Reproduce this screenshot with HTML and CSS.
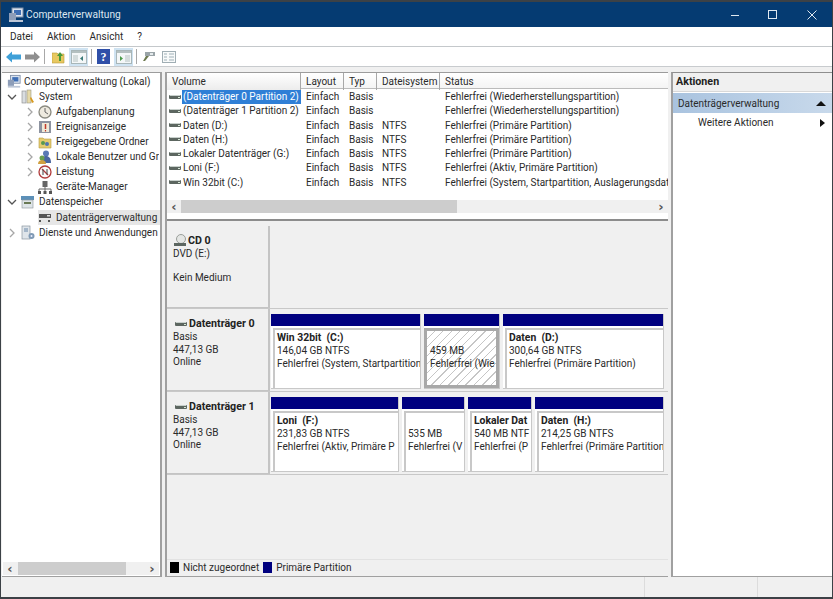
FILE: index.html
```html
<!DOCTYPE html>
<html lang="de">
<head>
<meta charset="utf-8">
<title>Computerverwaltung</title>
<link rel="stylesheet" href="styles.css">
</head>
<body>
<svg class="defs" width="0" height="0">
  <symbol id="disk" viewBox="0 0 12 6"><rect x="0" y="1" width="12" height="4" rx="1" fill="#5c6660"/><rect x="1" y="1" width="10" height="1" fill="#c8d0cc"/><rect x="9" y="3" width="2" height="1" fill="#d8e8d8"/></symbol>
  <symbol id="chev" viewBox="0 0 8 10"><path d="M2 1l4 4-4 4" fill="none" stroke="#a6a6a6" stroke-width="1.3"/></symbol>
  <symbol id="chevd" viewBox="0 0 10 8"><path d="M1 2l4 4 4-4" fill="none" stroke="#555" stroke-width="1.3"/></symbol>
  <symbol id="panel-l" viewBox="0 0 16 14"><rect x=".5" y=".5" width="15" height="13" fill="#f4f7f8" stroke="#a8b6b8"/><rect x="1" y="1" width="14" height="2" fill="#b4c0c0"/><rect x="2" y="5" width="5" height="7" fill="#d4dcdc"/><path d="M12 6v5L9 8.500z" fill="#3a7a78"/></symbol>
  <symbol id="panel-r" viewBox="0 0 16 14"><rect x=".5" y=".5" width="15" height="13" fill="#f4f7f8" stroke="#a8b6b8"/><rect x="1" y="1" width="14" height="2" fill="#b4c0c0"/><rect x="9" y="5" width="5" height="7" fill="#d4dcdc"/><path d="M4 6v5l3-2.500z" fill="#4a9a4a"/></symbol>
</svg>
<div class="window">
  <header class="titlebar">
    <svg class="app-icon" width="16" height="16" viewBox="0 0 16 16"><rect x="4" y="1" width="11" height="9" fill="#d9e2ee" stroke="#7f8fa8"/><rect x="6" y="3" width="7" height="5" fill="#3f6fb5"/><rect x="1" y="6" width="7" height="7" fill="#8d9db8"/><rect x="1" y="13" width="14" height="2" fill="#bcc6d6"/></svg>
    <span class="title">Computerverwaltung</span>
    <div class="controls">
      <svg width="10" height="10" viewBox="0 0 10 10"><path d="M2 5.5h8" stroke="#dfe8f0"/></svg>
      <svg width="10" height="10" viewBox="0 0 10 10"><rect x=".5" y=".5" width="8" height="8" fill="none" stroke="#dfe8f0"/></svg>
      <svg width="10" height="10" viewBox="0 0 10 10"><path d="M.5.5l9 9M9.5.5l-9 9" stroke="#dfe8f0"/></svg>
    </div>
  </header>
  <nav class="menubar"><span>Datei</span><span>Aktion</span><span>Ansicht</span><span>?</span></nav>
  <div class="toolbar">
    <svg class="tb" width="15" height="12" viewBox="0 0 15 12"><path d="M0 6l6-5.500v3h9v5H6v3z" fill="#3fa0d8"/></svg>
    <svg class="tb tb-fwd" width="15" height="12" viewBox="0 0 15 12"><path d="M15 6L9 .5v3H0v5h9v3z" fill="#8f8f8f"/></svg>
    <i class="sep"></i>
    <svg class="tb" width="13" height="14" viewBox="0 0 13 14"><path d="M0 3h5l1 1h6v9H0z" fill="#e8c860" stroke="#b99a3a" stroke-width=".6"/><path d="M7 11V6H5l3-4 3 4H9v5z" fill="#4a9a3a"/></svg>
    <span class="toggled"><svg width="16" height="14"><use href="#panel-l"/></svg></span>
    <i class="sep"></i>
    <svg class="tb" width="13" height="15" viewBox="0 0 13 15"><rect width="13" height="15" fill="#2f4fa8"/><text x="6.500" y="12" class="help">?</text></svg>
    <span class="toggled"><svg width="16" height="14"><use href="#panel-r"/></svg></span>
    <i class="sep"></i>
    <svg class="tb" width="13" height="11" viewBox="0 0 13 11"><rect x="3" y="1" width="10" height="4" fill="#9aa4a8"/><rect x="8" y="2" width="3" height="2" fill="#e4eaec"/><path d="M4 5L1 10h2l4-5z" fill="#6d7a50"/></svg>
    <svg class="tb tb-last" width="14" height="12" viewBox="0 0 14 12"><rect x=".5" y=".5" width="13" height="11" fill="#f8fafa" stroke="#a0aeb4"/><path d="M2 3h3M2 6h3M2 9h3M7 3h5M7 6h5M7 9h5" stroke="#9fb0b8"/></svg>
  </div>
  <main class="content">
    <aside class="tree">
      <ul class="tree-list">
        <li class="lvl0"><i class="tw"></i><svg class="ti" width="15" height="15" viewBox="0 0 16 16"><rect x="4" y="1" width="11" height="9" fill="#d9e2ee" stroke="#7f8fa8"/><rect x="6" y="3" width="7" height="5" fill="#3f6fb5"/><rect x="1" y="6" width="7" height="7" fill="#8d9db8"/><rect x="1" y="13" width="14" height="2" fill="#bcc6d6"/></svg><span>Computerverwaltung (Lokal)</span></li>
        <li class="lvl1"><svg class="tw" width="10" height="8"><use href="#chevd"/></svg><svg class="ti" width="14" height="15" viewBox="0 0 14 15"><rect x="1" y="2" width="4" height="12" fill="#d9dde0" stroke="#888" stroke-width=".6"/><rect x="6" y="1" width="4" height="13" fill="#e6d9a8" stroke="#998" stroke-width=".6"/><path d="M10 8l3 5-2 1-2-5z" fill="#d89a20"/></svg><span>System</span></li>
        <li class="lvl2"><svg class="tw" width="8" height="10"><use href="#chev"/></svg><svg class="ti" width="14" height="14" viewBox="0 0 14 14"><circle cx="7" cy="7" r="6" fill="#eeeadf" stroke="#8a8a80" stroke-width="1.300"/><path d="M7 3v4l3 2" fill="none" stroke="#666"/></svg><span>Aufgabenplanung</span></li>
        <li class="lvl2"><svg class="tw" width="8" height="10"><use href="#chev"/></svg><svg class="ti" width="14" height="14" viewBox="0 0 14 14"><rect x="1" y="1" width="12" height="12" fill="#8d93a0"/><rect x="4" y="3" width="7" height="9" fill="#f0ead8"/><path d="M7.500 4v5" stroke="#c0392b" stroke-width="1.500"/><path d="M7.500 10v1.500" stroke="#c0392b" stroke-width="1.200"/></svg><span>Ereignisanzeige</span></li>
        <li class="lvl2"><svg class="tw" width="8" height="10"><use href="#chev"/></svg><svg class="ti" width="14" height="14" viewBox="0 0 14 14"><path d="M1 3h4l1 1h7v9H1z" fill="#e6cc70" stroke="#b59a40" stroke-width=".6"/><circle cx="5" cy="8" r="2" fill="#5a9a50"/><circle cx="9" cy="9" r="2" fill="#5078b0"/></svg><span>Freigegebene Ordner</span></li>
        <li class="lvl2"><svg class="tw" width="8" height="10"><use href="#chev"/></svg><svg class="ti" width="14" height="14" viewBox="0 0 14 14"><circle cx="8" cy="3.500" r="3" fill="#5a7ab5"/><path d="M3 13c0-5 2-7 5-7s5 2 5 7z" fill="#4a67a0"/><circle cx="4" cy="8" r="2.500" fill="#6aa050"/><path d="M0 14c0-3 2-4 4-4s4 1 4 4z" fill="#d0a040"/></svg><span class="clip">Lokale Benutzer und Gr</span></li>
        <li class="lvl2"><svg class="tw" width="8" height="10"><use href="#chev"/></svg><svg class="ti" width="14" height="14" viewBox="0 0 14 14"><circle cx="7" cy="7" r="6" fill="#fafafa" stroke="#b03a3a" stroke-width="1.300"/><path d="M4 4l6 6" stroke="#b03a3a" stroke-width="1.300"/><path d="M5 10V4.500M9 9.500V4" stroke="#444"/></svg><span>Leistung</span></li>
        <li class="lvl2"><i class="tw"></i><svg class="ti" width="14" height="14" viewBox="0 0 14 14"><rect x="4.500" y="1" width="5" height="6" fill="#666"/><path d="M1 11V9h12v2M7 7v4" fill="none" stroke="#666"/><rect x="0" y="11" width="3" height="3" fill="#555"/><rect x="5.500" y="11" width="3" height="3" fill="#555"/><rect x="11" y="11" width="3" height="3" fill="#555"/></svg><span>Geräte-Manager</span></li>
        <li class="lvl1"><svg class="tw" width="10" height="8"><use href="#chevd"/></svg><svg class="ti" width="14" height="14" viewBox="0 0 14 14"><rect x="0" y="1" width="13" height="4" fill="#5c90b8"/><rect x="1" y="5" width="11" height="8" fill="#dfe5e8" stroke="#8a9298" stroke-width=".6"/><rect x="3" y="7" width="7" height="2" fill="#6a7a55"/></svg><span>Datenspeicher</span></li>
        <li class="lvl2 selected"><i class="tw"></i><svg class="ti" width="14" height="10" viewBox="0 0 14 10"><rect x="1" y="1" width="12" height="4" fill="#555"/><rect x="9" y="2" width="3" height="1.500" fill="#ddd"/><rect x="1" y="7" width="2" height="2" fill="#555"/><rect x="10" y="7" width="2" height="2" fill="#555"/></svg><span>Datenträgerverwaltung</span></li>
        <li class="lvl1"><svg class="tw" width="8" height="10"><use href="#chev"/></svg><svg class="ti" width="14" height="15" viewBox="0 0 14 15"><rect x="1" y="1" width="8" height="13" fill="#dfe5ea" stroke="#8a96a0" stroke-width=".7"/><path d="M3 4h4M3 6h4" stroke="#6a88a8"/><circle cx="10.500" cy="11" r="3" fill="#7f9ab5"/><circle cx="10.500" cy="11" r="1" fill="#eef"/></svg><span class="clip">Dienste und Anwendungen</span></li>
      </ul>
      <div class="hscroll tree-scroll"><b class="arrow">‹</b><i class="thumb"></i><b class="arrow">›</b></div>
    </aside>
    <section class="center">
      <div class="listview">
        <div class="row head"><span>Volume</span><span>Layout</span><span>Typ</span><span>Dateisystem</span><span>Status</span></div>
        <div class="row"><span class="vol"><svg class="di" width="12" height="6"><use href="#disk"/></svg><em class="sel">(Datenträger 0 Partition 2)</em></span><span>Einfach</span><span>Basis</span><span></span><span>Fehlerfrei (Wiederherstellungspartition)</span></div>
        <div class="row"><span class="vol"><svg class="di" width="12" height="6"><use href="#disk"/></svg><em>(Datenträger 1 Partition 2)</em></span><span>Einfach</span><span>Basis</span><span></span><span>Fehlerfrei (Wiederherstellungspartition)</span></div>
        <div class="row"><span class="vol"><svg class="di" width="12" height="6"><use href="#disk"/></svg><em>Daten (D:)</em></span><span>Einfach</span><span>Basis</span><span>NTFS</span><span>Fehlerfrei (Primäre Partition)</span></div>
        <div class="row"><span class="vol"><svg class="di" width="12" height="6"><use href="#disk"/></svg><em>Daten (H:)</em></span><span>Einfach</span><span>Basis</span><span>NTFS</span><span>Fehlerfrei (Primäre Partition)</span></div>
        <div class="row"><span class="vol"><svg class="di" width="12" height="6"><use href="#disk"/></svg><em>Lokaler Datenträger (G:)</em></span><span>Einfach</span><span>Basis</span><span>NTFS</span><span>Fehlerfrei (Primäre Partition)</span></div>
        <div class="row"><span class="vol"><svg class="di" width="12" height="6"><use href="#disk"/></svg><em>Loni (F:)</em></span><span>Einfach</span><span>Basis</span><span>NTFS</span><span>Fehlerfrei (Aktiv, Primäre Partition)</span></div>
        <div class="row"><span class="vol"><svg class="di" width="12" height="6"><use href="#disk"/></svg><em>Win 32bit (C:)</em></span><span>Einfach</span><span>Basis</span><span>NTFS</span><span>Fehlerfrei (System, Startpartition, Auslagerungsdat</span></div>
        <div class="hscroll list-scroll"><b class="arrow">‹</b><i class="thumb"></i><b class="arrow">›</b></div>
      </div>
      <div class="disks">
        <div class="disk">
          <div class="label"><strong><svg class="cd" width="15" height="14" viewBox="0 0 15 14"><circle cx="8" cy="5" r="4.500" fill="#e4e6e4" stroke="#9a9e9a"/><rect x="1" y="9" width="12" height="3" fill="#5c6660"/></svg>CD 0</strong><span>DVD (E:)</span><span class="gap">Kein Medium</span></div>
          <div class="empty"></div>
        </div>
        <div class="disk">
          <div class="label"><strong><svg class="di2" width="12" height="6"><use href="#disk"/></svg>Datenträger 0</strong><span>Basis</span><span>447,13 GB</span><span>Online</span></div>
          <div class="parts">
            <div class="part w150"><i class="bar"></i><div class="pbody"><b>Win 32bit&nbsp; (C:)</b><span>146,04 GB NTFS</span><span>Fehlerfrei (System, Startpartition</span></div></div>
            <div class="part w76"><i class="bar"></i><div class="pbody hatched"><b>&nbsp;</b><span>459 MB</span><span>Fehlerfrei (Wie</span></div></div>
            <div class="part w161"><i class="bar"></i><div class="pbody"><b>Daten&nbsp; (D:)</b><span>300,64 GB NTFS</span><span>Fehlerfrei (Primäre Partition)</span></div></div>
          </div>
        </div>
        <div class="disk">
          <div class="label"><strong><svg class="di2" width="12" height="6"><use href="#disk"/></svg>Datenträger 1</strong><span>Basis</span><span>447,13 GB</span><span>Online</span></div>
          <div class="parts">
            <div class="part w128"><i class="bar"></i><div class="pbody"><b>Loni&nbsp; (F:)</b><span>231,83 GB NTFS</span><span>Fehlerfrei (Aktiv, Primäre P</span></div></div>
            <div class="part w63"><i class="bar"></i><div class="pbody"><b>&nbsp;</b><span>535 MB</span><span>Fehlerfrei (V</span></div></div>
            <div class="part w64"><i class="bar"></i><div class="pbody"><b>Lokaler Dat</b><span>540 MB NTF</span><span>Fehlerfrei (P</span></div></div>
            <div class="part w129"><i class="bar"></i><div class="pbody"><b>Daten&nbsp; (H:)</b><span>214,25 GB NTFS</span><span>Fehlerfrei (Primäre Partition</span></div></div>
          </div>
        </div>
        <div class="spacer"></div>
        <div class="legend"><i class="sw black"></i><span>Nicht zugeordnet</span><i class="sw blue"></i><span>Primäre Partition</span></div>
      </div>
    </section>
    <aside class="actions">
      <div class="act-head">Aktionen</div>
      <div class="act-group"><span>Datenträgerverwaltung</span><i class="tri-up"></i></div>
      <div class="act-item"><span>Weitere Aktionen</span><i class="tri-right"></i></div>
    </aside>
  </main>
  <footer class="statusbar"><i></i><i></i></footer>
</div>
</body>
</html>
```

FILE: styles.css
```css
* { box-sizing: border-box; }
html, body { margin: 0; height: 100%; }
body {
  background: #3c4146;
  padding: 2px 1px 2px 1px;
  font-family: Roboto, "Open Sans", sans-serif;
  font-size: 10px;
  color: #2a2a2a;
  overflow: hidden;
}
.defs { position: absolute; }
.window { height: 595px; display: flex; flex-direction: column; background: #f0f0f0; }

.titlebar { height: 25px; flex: none; display: flex; align-items: center; background: #053b72; padding-left: 7px; color: #dde7f0; }
.app-icon { margin-right: 2px; }
.title { font-size: 10.2px; margin-top: -1px; }
.controls { margin-left: auto; display: flex; align-items: center; gap: 29px; padding-right: 15px; }

.menubar { height: 19px; flex: none; background: #fff; display: flex; align-items: center; gap: 14px; padding-left: 9px; }
.menubar span { line-height: 19px; }

.toolbar { height: 21px; flex: none; background: #fff; border-top: 1px solid #c4c8cb; border-bottom: 1px solid #c8cbce; display: flex; align-items: center; padding-left: 5px; }
.tb { flex: none; }
.tb-fwd { margin-left: 4px; }
.tb-last { margin-left: 7px; }
.sep { width: 1px; height: 15px; background: #a8a8a8; margin: 0 7px 0 4px; flex: none; }
.toggled { width: 19px; height: 18px; background: #cfe3f2; display: flex; align-items: center; justify-content: center; margin-left: 4px; flex: none; }
.toggled + .sep { margin: 0 5px 0 3px; }
.help { font: bold 12px "Liberation Serif", serif; fill: #fff; text-anchor: middle; }

.content { flex: 1; min-height: 0; display: flex; padding: 5px 0 0 1px; gap: 3px; }

.tree { width: 160px; flex: none; background: #fff; border-top: 1px solid #9c9c9c; border-right: 2px solid #a0a0a0; border-bottom: 1px solid #a0a0a0; display: flex; flex-direction: column; }
.tree-list { list-style: none; margin: 0; padding: 1px 0 0; flex: 1; overflow: hidden; }
.tree-list li { height: 15px; display: flex; align-items: center; white-space: nowrap; }
.tw { width: 10px; flex: none; margin-right: 5px; }
.ti { flex: none; width: 14px; margin-right: 4px; }
.lvl0 { padding-left: 3px; }
.lvl0 .tw { display: none; }
.lvl0 .ti { margin-left: 2px; margin-right: 3px; }
.lvl1 { padding-left: 5px; }
.lvl1 .tw { margin-right: 4px; }
.lvl2 { padding-left: 24px; }
.lvl2 .tw { width: 8px; margin-right: 4px; }
.tree-list .selected { margin-top: 1px; background: linear-gradient(#fff, #fff) 0 0 / 36px 100% no-repeat, #e6e6e6; }
.clip { overflow: hidden; }

.hscroll { display: flex; align-items: center; height: 13px; background: #f0f0f0; flex: none; }
.hscroll .arrow { font: bold 13px/13px "DejaVu Sans", sans-serif; color: #555; width: 14px; text-align: center; flex: none; }
.thumb { background: #cdcdcd; height: 100%; display: block; }
.tree-scroll { margin: 0 1px 1px; }
.tree-scroll .thumb { width: 108px; margin-left: 1px; margin-right: auto; }
.list-scroll { margin: 11px 0 0; }
.list-scroll .thumb { width: 276px; margin-right: auto; }

.center { width: 503px; flex: none; display: flex; flex-direction: column; border-left: 2px solid #a0a0a0; }

.listview { height: 149px; flex: none; background: #fff; border-top: 1px solid #9c9c9c; border-bottom: 2px solid #8c8c8c; overflow: hidden; }
.row { display: grid; grid-template-columns: 134px 43px 33px 63px 1fr; height: 14.3px; line-height: 15px; white-space: nowrap; }
.row > span { padding-left: 5px; }
.row.head { height: 16px; line-height: 17px; background: linear-gradient(#fff, #f4f4f4); border-bottom: 1px solid #bbb; }
.row.head > span { padding-left: 5px; border-right: 1px solid #a8a8a8; }
.row.head > span:first-child { background: linear-gradient(#fff, #ececec); }
.row.head > span:last-child { border-right: 0; }
.row > .vol { padding-left: 2px; display: flex; align-items: center; }
.vol em { font-style: normal; padding: 0 1px; margin-left: 1px; }
.vol .sel { background: #2f7fd6; color: #fff; padding-right: 2px; line-height: 14px; }
.di { flex: none; }

.disks { flex: 1; min-height: 0; display: flex; flex-direction: column; background: #f0f0f0; padding-top: 5px; border-bottom: 1px solid #a0a0a0; }
.disk { height: 83px; flex: none; display: flex; border-bottom: 1px solid #c8c8c8; }
.label { width: 103px; flex: none; padding: 6px 0 0 6px; display: flex; flex-direction: column; line-height: 12.6px; border-right: 2px solid #c4c4c4; border-bottom: 1px solid #c4c4c4; background: #f0f0f0; }
.label strong { font-weight: 700; font-size: 10.7px; line-height: 15px; color: #222; display: flex; align-items: center; margin-top: 1px; }
.di2 { margin: 0 2px 0 2px; }
.label .gap { margin-top: 11px; }
.empty { flex: 1; background: #f0f0f0; }
.parts { flex: 1; display: flex; gap: 3px; padding: 5px 4px 2px 1px; }
.part { display: flex; flex-direction: column; min-width: 0; background: #fff; border-right: 1px solid #c8c8c8; border-bottom: 1px solid #c8c8c8; }
.w150 { width: 150px; } .w76 { width: 76px; } .w161 { width: 161px; }
.w128 { width: 128px; } .w63 { width: 63px; } .w64 { width: 64px; } .w129 { width: 129px; }
.bar { display: block; height: 12px; background: #00007f; flex: none; }
.pbody { flex: 1; margin: 2px 0 0 2px; padding: 1px 1px 0 2px; border-top: 2px solid #c8c8c8; border-left: 2px solid #c8c8c8; display: flex; flex-direction: column; line-height: 13px; overflow: hidden; white-space: nowrap; }
.pbody b { font-weight: 700; font-size: 10.4px; color: #222; }
.hatched { margin: 2px 0 0; border: 3px solid #a8a8a8; padding: 0 1px 0 3px; background: repeating-linear-gradient(135deg, #fff 0 5px, #c6c6c6 5px 6px); }

.spacer { flex: 1; }
.legend { height: 17px; flex: none; display: flex; align-items: center; padding: 0 0 1px 3px; border-top: 1px solid #e2e2e2; }
.sw { width: 9px; height: 11px; flex: none; margin-right: 4px; }
.sw.black { background: #000; }
.sw.blue { background: #00007f; margin-left: 4px; }

.actions { flex: 1; min-width: 0; background: #fff; border-top: 1px solid #8e8e8e; border-left: 2px solid #a0a0a0; border-bottom: 1px solid #a0a0a0; }
.act-head { height: 19px; line-height: 18px; background: #f0f0f0; font-weight: 700; font-size: 10.7px; padding-left: 3px; border-bottom: 1px solid #d8d8d8; color: #222; }
.act-group { height: 20px; margin-top: 1px; background: linear-gradient(90deg, #a9c3df, #c8d9eb); display: flex; align-items: center; justify-content: space-between; padding: 0 5px; }
.tri-up { width: 0; height: 0; border: 5px solid transparent; border-top: 0; border-bottom: 5px solid #111; margin-right: 1px; }
.act-item { height: 19px; display: flex; align-items: center; justify-content: space-between; padding: 0 7px 0 25px; }
.tri-right { width: 0; height: 0; border: 4px solid transparent; border-right: 0; border-left: 5px solid #111; }

.statusbar { height: 20px; flex: none; background: #f0f0f0; display: flex; justify-content: flex-end; }
.statusbar i { width: 1px; height: 100%; background: #dcdcdc; margin-right: 74px; }
.statusbar i:first-child { margin-right: 112px; }
```
